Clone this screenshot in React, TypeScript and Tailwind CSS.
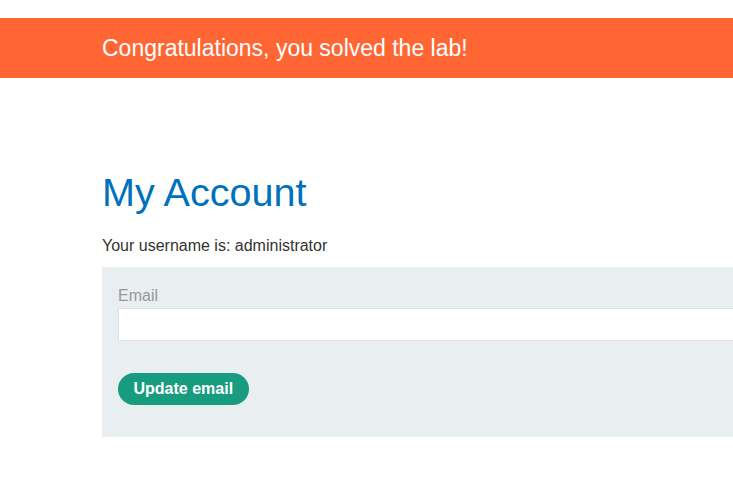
import React from 'react';

function App() {
  return (
    <div className="min-h-screen bg-white overflow-hidden font-['Liberation_Sans',Arial,sans-serif]">
      <div className="h-[18px]" />
      <div className="h-[60px] bg-[#ff6633] flex items-center pl-[102px]">
        <h4 className="text-white text-[23px] leading-[28px]">
          Congratulations, you solved the lab!
        </h4>
      </div>

      <main className="pl-[102px] pt-[91px]">
        <h1 className="text-[39.6px] leading-[46px] text-[#0071bc]">My Account</h1>
        <p className="mt-[21px] text-[16px] leading-[20px] text-[#333332]">Your username is: administrator</p>
        <form className="mt-[11px] w-[900px] bg-[#e9eef1] pt-[20px] pb-[32px] px-[16px]">
          <label className="block text-[16px] leading-[18px] text-[#999]">Email</label>
          <input
            type="email"
            className="block mt-[3px] w-full h-[33px] bg-white border border-[#dfe3e6] outline-none"
          />
          <button
            type="button"
            className="mt-[32px] h-[32px] px-[15.5px] rounded-full bg-[#189c80] text-white font-bold text-[16px]"
          >
            Update email
          </button>
        </form>
      </main>
    </div>
  );
}

export default App;
